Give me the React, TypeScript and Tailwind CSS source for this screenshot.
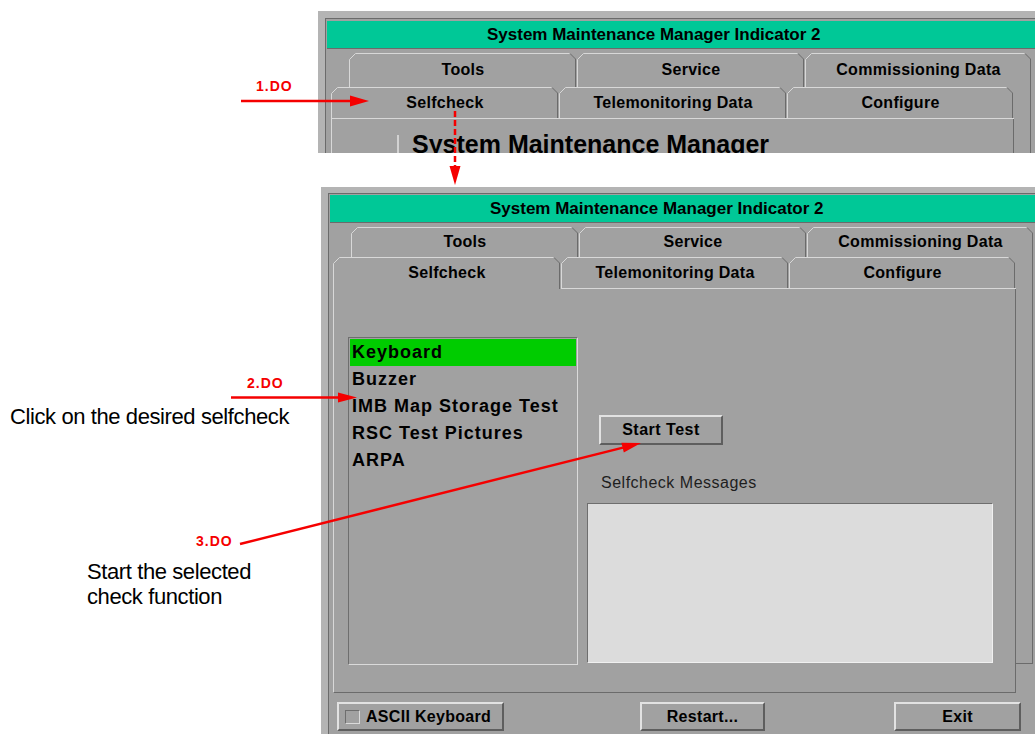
import React from "react";

const LIGHT = "#d8d8d8";
const DARK = "#6b6b6b";

function Tab({ label, w, h, cls, bottom }: { label: string; w: number; h: number; cls: string; bottom: boolean }) {
  return (
    <div className={`relative flex shrink-0 items-center justify-center ${cls}`}>
      <svg className="absolute inset-0" width={w} height={h}>
        <polyline points={`0.5,${h} 0.5,6.5 6.5,0.5 ${w - 7},0.5`} fill="none" stroke={LIGHT} />
        <polyline points={`${w - 7},0.5 ${w - 1.5},6 ${w - 1.5},${h}`} fill="none" stroke={DARK} />
        {bottom && <line x1={0} y1={h - 0.5} x2={w} y2={h - 0.5} stroke={LIGHT} />}
      </svg>
      <span className="relative text-[16px] font-bold tracking-[0.3px] text-black">{label}</span>
    </div>
  );
}

function TitleBar() {
  return (
    <div className="ml-[1px] flex h-[28px] items-center border-b border-[#6b6b6b] bg-[#00c897] pl-[160px]">
      <span className="text-[17px] font-bold text-black">System Maintenance Manager Indicator 2</span>
    </div>
  );
}

function TabRows({ row1H, selfActive, children }: { row1H: number; selfActive: boolean; children: React.ReactNode }) {
  return (
    <>
      <div className={`ml-[18px] flex ${row1H === 34 ? "h-[34px]" : "h-[30px]"}`}>
        <Tab label="Tools" w={228} h={row1H} cls={row1H === 34 ? "w-[228px] h-[34px]" : "w-[228px] h-[30px]"} bottom={false} />
        <Tab label="Service" w={228} h={row1H} cls={row1H === 34 ? "w-[228px] h-[34px]" : "w-[228px] h-[30px]"} bottom={false} />
        <Tab label="Commissioning Data" w={227} h={row1H} cls={row1H === 34 ? "w-[227px] h-[34px]" : "w-[227px] h-[30px]"} bottom={false} />
      </div>
      <div className="flex items-start">
        <div className="flex w-[683px] flex-col">
          <div className="flex h-[32px]">
            <Tab label="Selfcheck" w={228} h={32} cls="w-[228px] h-[32px]" bottom={!selfActive} />
            <Tab label="Telemonitoring Data" w={228} h={32} cls="w-[228px] h-[32px]" bottom />
            <Tab label="Configure" w={227} h={32} cls="w-[227px] h-[32px]" bottom />
          </div>
          {children}
        </div>
        <div className="h-[407px] w-[17px] border-r border-b border-[#6b6b6b]" />
      </div>
    </>
  );
}

function Raised({ cls, children }: { cls: string; children: React.ReactNode }) {
  return (
    <div
      className={`flex items-center border-2 border-t-[#e2e2e2] border-l-[#e2e2e2] border-r-[#5e5e5e] border-b-[#5e5e5e] bg-[#a1a1a1] text-[16px] font-bold tracking-[0.3px] text-black ${cls}`}
    >
      {children}
    </div>
  );
}

function WindowOne() {
  return (
    <div className="mt-[11px] h-[142px] w-[740px] shrink-0 overflow-hidden bg-[#b4b4b4] pt-[7px] pl-[7px]">
      <div className="h-[200px] border-t border-l border-[#6b6b6b] bg-[#a1a1a1] pt-[2px]">
        <TitleBar />
        <div className="mt-[4px] pl-[5px]">
          <TabRows row1H={34} selfActive={false}>
            <div className="flex h-[120px] border-l border-r border-l-[#d8d8d8] border-r-[#6b6b6b] pl-[65px]">
              <div className="mt-[16px] h-[40px] w-[2px] bg-[#d2d2d2]" />
              <div className="mt-[10px] ml-[13px] text-[25px] font-bold leading-[30px] text-black">System Maintenance Manager</div>
            </div>
          </TabRows>
        </div>
      </div>
    </div>
  );
}

const ITEMS = ["Keyboard", "Buzzer", "IMB Map Storage Test", "RSC Test Pictures", "ARPA"];

function WindowTwo() {
  return (
    <div className="mt-[34px] ml-[3px] w-[740px] shrink-0 bg-[#b4b4b4] pt-[6px] pl-[7px]">
      <div className="border-t border-l border-[#6b6b6b] bg-[#a1a1a1] pt-[1px] pb-[20px]">
        <TitleBar />
        <div className="mt-[4px] pl-[4px]">
          <TabRows row1H={30} selfActive>
            <div className="flex h-[404px] border-l border-r border-b border-l-[#d8d8d8] border-r-[#6b6b6b] border-b-[#6b6b6b] pt-[48px] pl-[14px]">
              <div className="h-[328px] w-[230px] border border-t-[#6e6e6e] border-l-[#6e6e6e] border-r-[#dadada] border-b-[#dadada] p-[1px]">
                {ITEMS.map((it, i) => (
                  <div
                    key={it}
                    className={`flex h-[27px] items-center pl-[2px] text-[18px] font-bold tracking-[1px] text-black ${i === 0 ? "bg-[#00cc00]" : ""}`}
                  >
                    {it}
                  </div>
                ))}
              </div>
              <div className="ml-[9px] flex flex-col items-start">
                <Raised cls="mt-[78px] ml-[12px] h-[30px] w-[124px] justify-center tracking-[0.5px]">Start Test</Raised>
                <div className="mt-[29px] ml-[14px] text-[16px] leading-[18px] tracking-[0.5px] text-[#1e1e1e]">Selfcheck Messages</div>
                <div className="mt-[11px] h-[160px] w-[406px] border border-t-[#6e6e6e] border-l-[#6e6e6e] border-r-[#f0f0f0] border-b-[#f0f0f0] bg-[#dcdcdc]" />
              </div>
            </div>
          </TabRows>
          <div className="mt-[9px] flex items-start">
            <Raised cls="ml-[4px] h-[29px] w-[167px] pl-[6px]">
              <span className="h-[14px] w-[15px] border border-t-[#6e6e6e] border-l-[#6e6e6e] border-r-[#dadada] border-b-[#dadada]" />
              <span className="ml-[6px]">ASCII Keyboard</span>
            </Raised>
            <Raised cls="ml-[136px] h-[29px] w-[125px] justify-center">Restart...</Raised>
            <Raised cls="ml-[129px] h-[29px] w-[127px] justify-center">Exit</Raised>
          </div>
        </div>
      </div>
    </div>
  );
}

function Arrows() {
  const red = "#f50000";
  return (
    <svg className="pointer-events-none absolute inset-0" width={1035} height={734}>
      <line x1={241} y1={101} x2={352} y2={101} stroke={red} strokeWidth={2.5} />
      <polygon points="350,95.5 369,101 350,106.5" fill={red} />
      <line x1={455} y1={111} x2={455} y2={167} stroke={red} strokeWidth={2.5} strokeDasharray="6 3" />
      <polygon points="449.5,166 460.5,166 455,185" fill={red} />
      <line x1={231} y1={397.5} x2={340} y2={397.5} stroke={red} strokeWidth={2.5} />
      <polygon points="338,392.5 357,397.5 338,402.5" fill={red} />
      <line x1={240} y1={544} x2={623} y2={447.6} stroke={red} strokeWidth={2.5} />
      <polygon points="623.8,452.5 641,443 621.4,442.8" fill={red} />
    </svg>
  );
}

export default function App() {
  return (
    <div className="relative flex h-[734px] w-[1035px] overflow-hidden bg-white font-['Liberation_Sans',Arial,sans-serif]">
      <div className="flex w-[318px] shrink-0 flex-col">
        <div className="mt-[78px] pl-[256px] text-[14px] font-bold leading-[16px] tracking-[1px] text-[#f50000]">1.DO</div>
        <div className="mt-[281px] pl-[247px] text-[14px] font-bold leading-[16px] tracking-[1px] text-[#f50000]">2.DO</div>
        <div className="mt-[13px] pl-[10px] text-[22px] leading-[26px] tracking-[-0.4px] text-black">Click on the desired selfcheck</div>
        <div className="mt-[103px] pl-[196px] text-[14px] font-bold leading-[16px] tracking-[1px] text-[#f50000]">3.DO</div>
        <div className="mt-[10px] pl-[87px] text-[22px] leading-[25px] tracking-[-0.4px] text-black">
          Start the selected
          <br />
          check function
        </div>
      </div>
      <div className="flex shrink-0 flex-col">
        <WindowOne />
        <WindowTwo />
      </div>
      <Arrows />
    </div>
  );
}
